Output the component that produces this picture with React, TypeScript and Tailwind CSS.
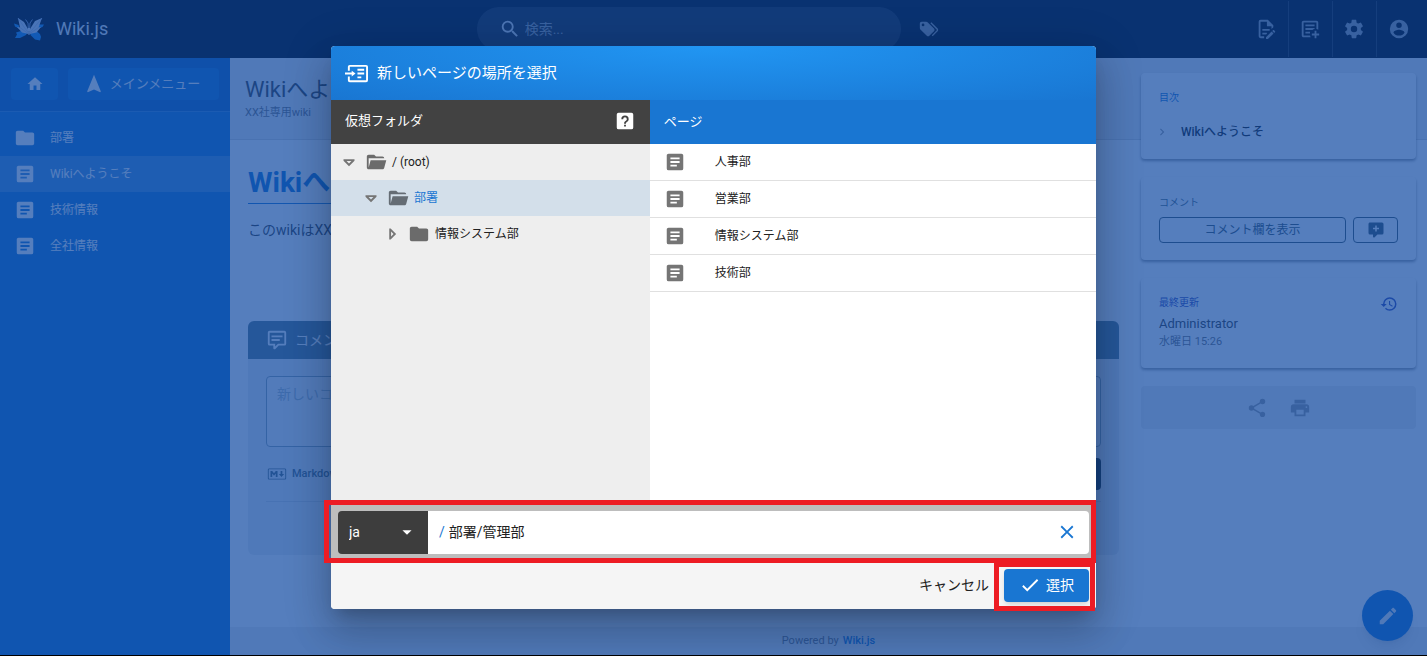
import { useState } from "react";
import clsx from "clsx";

const icons = {
  home: "M10,20V14H14V20H19V12H22L12,3L2,12H5V20H10Z",
  navigation: "M12,2L4.5,20.29L5.21,21L12,18L18.79,21L19.5,20.29L12,2Z",
  folder: "M10,4H4C2.89,4 2,4.89 2,6V18A2,2 0 0,0 4,20H20A2,2 0 0,0 22,18V8C22,6.89 21.1,6 20,6H12L10,4Z",
  folderOpen:
    "M19,20H4C2.89,20 2,19.1 2,18V6C2,4.89 2.89,4 4,4H10L12,6H19A2,2 0 0,1 21,8H21L4,8V18L6.14,10H23.21L20.93,18.5C20.7,19.37 19.92,20 19,20Z",
  page: "M14,17H7V15H14M17,13H7V11H17M17,9H7V7H17M19,3H5C3.89,3 3,3.89 3,5V19A2,2 0 0,0 5,21H19A2,2 0 0,0 21,19V5C21,3.89 20.1,3 19,3Z",
  magnify:
    "M9.5,3A6.5,6.5 0 0,1 16,9.5C16,11.11 15.41,12.59 14.44,13.73L14.71,14H15.5L20.5,19L19,20.5L14,15.5V14.71L13.73,14.44C12.59,15.41 11.11,16 9.5,16A6.5,6.5 0 0,1 3,9.5A6.5,6.5 0 0,1 9.5,3M9.5,5C7,5 5,7 5,9.5C5,12 7,14 9.5,14C12,14 14,12 14,9.5C14,7 12,5 9.5,5Z",
  tags: "M5.5,9A1.5,1.5 0 0,0 7,7.5A1.5,1.5 0 0,0 5.5,6A1.5,1.5 0 0,0 4,7.5A1.5,1.5 0 0,0 5.5,9M17.41,11.58C17.77,11.94 18,12.44 18,13C18,13.55 17.78,14.05 17.41,14.41L12.41,19.41C12.05,19.77 11.55,20 11,20C10.45,20 9.95,19.78 9.58,19.41L2.59,12.42C2.22,12.05 2,11.55 2,11V6C2,4.89 2.89,4 4,4H9C9.55,4 10.05,4.22 10.41,4.58L17.41,11.58M13.54,5.71L14.54,4.71L21.41,11.58C21.78,11.94 22,12.45 22,13C22,13.55 21.78,14.05 21.42,14.41L16.04,19.79L15.04,18.79L20.75,13L13.54,5.71Z",
  pageEdit:
    "M8,12H16V14H8V12M10,20H6V4H13V9H18V12.1L20,10.1V8L14,2H6A2,2 0 0,0 4,4V20A2,2 0 0,0 6,22H10V20M8,18H12.1L13,17.1V16H8V18M20.2,13C20.3,13 20.5,13.1 20.6,13.2L21.9,14.5C22.1,14.7 22.1,15.1 21.9,15.3L20.9,16.3L18.8,14.2L19.8,13.2C19.9,13.1 20,13 20.2,13M20.2,16.9L14.1,23H12V20.9L18.1,14.8L20.2,16.9Z",
  pagePlus:
    "M17 14H19V17H22V19H19V22H17V19H14V17H17V14M5 3H19C20.11 3 21 3.89 21 5V12.8C20.39 12.45 19.72 12.2 19 12.08V5H5V19H12.08C12.2 19.72 12.45 20.39 12.8 21H5C3.89 21 3 20.11 3 19V5C3 3.89 3.89 3 5 3M7 7H17V9H7V7M7 11H17V12.08C16.15 12.22 15.37 12.54 14.68 13H7V11M7 15H12V17H7V15Z",
  cog: "M12,15.5A3.5,3.5 0 0,1 8.5,12A3.5,3.5 0 0,1 12,8.5A3.5,3.5 0 0,1 15.5,12A3.5,3.5 0 0,1 12,15.5M19.43,12.97C19.47,12.65 19.5,12.33 19.5,12C19.5,11.67 19.47,11.34 19.43,11L21.54,9.37C21.73,9.22 21.78,8.95 21.66,8.73L19.66,5.27C19.54,5.05 19.27,4.96 19.05,5.05L16.56,6.05C16.04,5.66 15.5,5.32 14.87,5.07L14.5,2.42C14.46,2.18 14.25,2 14,2H10C9.75,2 9.54,2.18 9.5,2.42L9.13,5.07C8.5,5.32 7.96,5.66 7.44,6.05L4.95,5.05C4.73,4.96 4.46,5.05 4.34,5.27L2.34,8.73C2.21,8.95 2.27,9.22 2.46,9.37L4.57,11C4.53,11.34 4.5,11.67 4.5,12C4.5,12.33 4.53,12.65 4.57,12.97L2.46,14.63C2.27,14.78 2.21,15.05 2.34,15.27L4.34,18.73C4.46,18.95 4.73,19.03 4.95,18.95L7.44,17.94C7.96,18.34 8.5,18.68 9.13,18.93L9.5,21.58C9.54,21.82 9.75,22 10,22H14C14.25,22 14.46,21.82 14.5,21.58L14.87,18.93C15.5,18.67 16.04,18.34 16.56,17.94L19.05,18.95C19.27,19.03 19.54,18.95 19.66,18.73L21.66,15.27C21.78,15.05 21.73,14.78 21.54,14.63L19.43,12.97Z",
  account:
    "M12,19.2C9.5,19.2 7.29,17.92 6,16C6.03,14 10,12.9 12,12.9C14,12.9 17.97,14 18,16C16.71,17.92 14.5,19.2 12,19.2M12,5A3,3 0 0,1 15,8A3,3 0 0,1 12,11A3,3 0 0,1 9,8A3,3 0 0,1 12,5M12,2A10,10 0 0,0 2,12A10,10 0 0,0 12,22A10,10 0 0,0 22,12C22,6.47 17.5,2 12,2Z",
  commentPlus:
    "M9,22A1,1 0 0,1 8,21V18H4A2,2 0 0,1 2,16V4C2,2.89 2.9,2 4,2H20A2,2 0 0,1 22,4V16A2,2 0 0,1 20,18H13.9L10.2,21.71C10,21.9 9.75,22 9.5,22V22H9M11,6V9H8V11H11V14H13V11H16V9H13V6H11Z",
  commentText:
    "M9,22A1,1 0 0,1 8,21V18H4A2,2 0 0,1 2,16V4C2,2.89 2.9,2 4,2H20A2,2 0 0,1 22,4V16A2,2 0 0,1 20,18H13.9L10.2,21.71C10,21.9 9.75,22 9.5,22V22H9M10,16V19.08L13.08,16H20V4H4V16H10M6,7H18V9H6V7M6,11H15V13H6V11Z",
  history:
    "M13.5,8H12V13L16.28,15.54L17,14.33L13.5,12.25V8M13,3A9,9 0 0,0 4,12H1L4.96,16.03L9,12H6A7,7 0 0,1 13,5A7,7 0 0,1 20,12A7,7 0 0,1 13,19C11.07,19 9.32,18.21 8.06,16.94L6.64,18.36C8.27,20 10.5,21 13,21A9,9 0 0,0 22,12A9,9 0 0,0 13,3",
  share:
    "M18,16.08C17.24,16.08 16.56,16.38 16.04,16.85L8.91,12.7C8.96,12.47 9,12.24 9,12C9,11.76 8.96,11.53 8.91,11.3L15.96,7.19C16.5,7.69 17.21,8 18,8A3,3 0 0,0 21,5A3,3 0 0,0 18,2A3,3 0 0,0 15,5C15,5.24 15.04,5.47 15.09,5.7L8.04,9.81C7.5,9.31 6.79,9 6,9A3,3 0 0,0 3,12A3,3 0 0,0 6,15C6.79,15 7.5,14.69 8.04,14.19L15.16,18.34C15.11,18.55 15.08,18.77 15.08,19C15.08,20.61 16.39,21.91 18,21.91C19.61,21.91 20.92,20.61 20.92,19A2.92,2.92 0 0,0 18,16.08Z",
  printer:
    "M18,3H6V7H18M19,12A1,1 0 0,1 18,11A1,1 0 0,1 19,10A1,1 0 0,1 20,11A1,1 0 0,1 19,12M16,19H8V14H16M19,8H5A3,3 0 0,0 2,11V17H6V21H18V17H22V11A3,3 0 0,0 19,8Z",
  markdown:
    "M20.56 18H3.44C2.65 18 2 17.37 2 16.59V7.41C2 6.63 2.65 6 3.44 6H20.56C21.35 6 22 6.63 22 7.41V16.59C22 17.37 21.35 18 20.56 18M3.44 6.94C3.18 6.94 2.96 7.15 2.96 7.41V16.6C2.96 16.85 3.18 17.06 3.44 17.06H20.56C20.82 17.06 21.04 16.85 21.04 16.6V7.41C21.04 7.15 20.82 6.94 20.56 6.94H3.44M4.89 15.19V8.81H6.81L8.73 11.16L10.65 8.81H12.58V15.19H10.65V11.53L8.73 13.88L6.81 11.53V15.19H4.89M16.9 15.19L14 12.09H15.94V8.81H17.86V12.09H19.79L16.9 15.19",
  pencil:
    "M20.71,7.04C21.1,6.65 21.1,6 20.71,5.63L18.37,3.29C18,2.9 17.35,2.9 16.96,3.29L15.12,5.12L18.87,8.87M3,17.25V21H6.75L17.81,9.93L14.06,6.18L3,17.25Z",
  chevronRight: "M8.59,16.58L13.17,12L8.59,7.41L10,6L16,12L10,18L8.59,16.58Z",
  menuDown: "M7,10L12,15L17,10H7Z",
  expanded: "M18,9V10.5L12,16.5L6,10.5V9H18M12,13.67L14.67,11H9.33L12,13.67Z",
  collapsed: "M9,6H10.5L16.5,12L10.5,18H9V6M13.67,12L11,9.33V14.67L13.67,12Z",
  close: "M19,6.41L17.59,5L12,10.59L6.41,5L5,6.41L10.59,12L5,17.59L6.41,19L12,13.41L17.59,19L19,17.59L13.41,12L19,6.41Z",
  check: "M21,7L9,19L3.5,13.5L4.91,12.09L9,16.17L19.59,5.59L21,7Z",
  helpBox:
    "M11,18H13V16H11V18M12,6A4,4 0 0,0 8,10H10A2,2 0 0,1 12,8A2,2 0 0,1 14,10C14,12 11,11.75 11,15H13C13,12.75 16,12.5 16,10A4,4 0 0,0 12,6M5,3H19A2,2 0 0,1 21,5V19A2,2 0 0,1 19,21H5A2,2 0 0,1 3,19V5A2,2 0 0,1 5,3Z",
  pageNext:
    "M22,3H5A2,2 0 0,0 3,5V9H5V5H22V19H5V15H3V19A2,2 0 0,0 5,21H22A2,2 0 0,0 24,19V5A2,2 0 0,0 22,3M7,15V13H0V11H7V9L11,12L7,15M20,13H13V11H20V13M20,9H13V7H20V9M17,17H13V15H17V17Z",
};

type IconName = keyof typeof icons;

function Icon({ name, size = 22, className }: { name: IconName; size?: number; className?: string }) {
  return (
    <svg
      width={size}
      height={size}
      viewBox="0 0 24 24"
      fill="currentColor"
      fillRule="evenodd"
      aria-hidden="true"
      className={clsx("shrink-0", className)}
    >
      <path d={icons[name]} />
    </svg>
  );
}

function Logo() {
  return (
    <svg width="30" height="23" viewBox="0 0 60 46" aria-hidden="true" className="shrink-0">
      <path d="M28 27L14 26L4 29L6 33L2 40L12 40L24 34Z" fill="#1e88e5" />
      <path d="M0 11L9 14L12 22L2 17Z" fill="#1e88e5" />
      <path d="M32 27L46 27L52 32L54 38L52 45L42 43L33 34Z" fill="#1e88e5" />
      <path d="M60 13L50 13L46 22L57 18Z" fill="#1e88e5" />
      <path d="M29 32L16 29L6 18L12 19L8 0L20 8L28 22Z" fill="#d5dcec" />
      <path d="M31 32L45 29L54 18L49 19L56 0L42 6L32 22Z" fill="#d5dcec" />
      <path d="M29 30L20 18L8 0M31 30L42 17L56 0M28 31L12 19M32 31L49 19" fill="none" stroke="#a9b9da" strokeWidth="1.5" />
      <path d="M29 26L28 10L23 3M31 26L32 10L37 3" fill="none" stroke="#8fa0c4" strokeWidth="2" />
      <path d="M28 20H32L31 34H29Z" fill="#e9edf6" />
    </svg>
  );
}

const navItems: { label: string; icon: IconName; active?: boolean }[] = [
  { label: "部署", icon: "folder" },
  { label: "Wikiへようこそ", icon: "page", active: true },
  { label: "技術情報", icon: "page" },
  { label: "全社情報", icon: "page" },
];

const headerActions: { label: string; icon: IconName }[] = [
  { label: "ページ操作", icon: "pageEdit" },
  { label: "新規ページ", icon: "pagePlus" },
  { label: "管理", icon: "cog" },
  { label: "アカウント", icon: "account" },
];

const pages = ["人事部", "営業部", "情報システム部", "技術部"];

function Header() {
  return (
    <header className="grid h-[58px] shrink-0 grid-cols-3 items-center bg-black text-[#9e9e9e]">
      <a href="#" className="flex items-center gap-3 pl-[14px] text-[#eeeeee]">
        <Logo />
        <span className="text-lg">Wiki.js</span>
      </a>
      <div className="flex items-center">
        <label className="ml-px flex h-[44px] flex-1 items-center gap-1 rounded-full bg-[#212121] pl-[22px] text-[#e0e0e0]">
          <Icon name="magnify" />
          <input
            type="text"
            aria-label="検索"
            placeholder="検索..."
            className="min-w-0 flex-1 bg-transparent text-sm outline-none placeholder:text-[#9e9e9e]"
          />
        </label>
        <button aria-label="タグ" className="ml-[6px] flex w-[44px] justify-center">
          <Icon name="tags" />
        </button>
      </div>
      <div className="flex justify-end divide-x divide-[#2b2b2b] pr-[6px]">
        {headerActions.map((action) => (
          <button key={action.label} aria-label={action.label} className="flex h-[56px] w-[44px] items-center justify-center">
            <Icon name={action.icon} />
          </button>
        ))}
      </div>
    </header>
  );
}

function Sidebar() {
  return (
    <aside className="w-[230px] shrink-0 bg-[#1976d2] text-[13px] text-white">
      <div className="flex h-[54px] gap-[10px] border-b border-[#3f8bd9] bg-[#1565c0] px-[11px] py-[10px]">
        <button aria-label="ホーム" className="flex h-8 w-[47px] items-center justify-center rounded bg-[#1976d2]">
          <Icon name="home" size={18} />
        </button>
        <button className="flex h-8 flex-1 items-center justify-center gap-[5px] rounded bg-[#1976d2] pr-1">
          <Icon name="navigation" />
          メインメニュー
        </button>
      </div>
      <nav className="pt-2">
        {navItems.map((item) => (
          <a
            key={item.label}
            href="#"
            className={clsx("flex h-9 items-center gap-[14px] pl-[14px] text-xs", item.active && "bg-[#4791db]")}
          >
            <Icon name={item.icon} />
            {item.label}
          </a>
        ))}
      </nav>
    </aside>
  );
}

function Comments() {
  return (
    <section className="mt-[80px] overflow-hidden rounded-md bg-[#eceff1]">
      <h2 className="flex h-[38px] items-center gap-[7px] bg-[#607d8b] pl-[18px] text-sm text-white">
        <Icon name="commentText" />
        コメント
      </h2>
      <div className="px-[18px] pt-[17px] pb-[53px]">
        <textarea
          aria-label="新しいコメント"
          placeholder="新しいコメントを書く..."
          className="block h-[71px] w-full resize-none rounded border border-[#90a4ae] bg-[#f5f5f5] px-[10px] py-[7px] text-sm outline-none placeholder:text-[#b0bec5]"
        />
        <div className="mt-[11px] flex items-center gap-1 border-b border-[#cfd8dc] pb-[11px] text-[11px] font-medium text-[#546e7a]">
          <Icon name="markdown" />
          <span>Markdown Format</span>
          <button className="ml-auto h-8 rounded bg-[#263238] px-4 text-white">コメントを投稿</button>
        </div>
      </div>
    </section>
  );
}

function PageInfo() {
  return (
    <aside className="relative -mt-[67px] mr-[11px] ml-[22px] w-[275px] shrink-0">
      <section className="h-[86px] rounded bg-white px-[18px] pt-[17px] shadow-[0_2px_3px_rgba(0,0,0,0.4)]">
        <h2 className="text-[10px] leading-4 text-[#1976d2]">目次</h2>
        <a href="#" className="mt-4 flex items-center text-xs leading-5 text-[#212121]">
          <Icon name="chevronRight" size={14} className="-ml-1 text-[#9e9e9e]" />
          <span className="ml-3 font-medium">Wikiへようこそ</span>
        </a>
      </section>
      <section className="mt-[18px] h-[83px] rounded bg-white px-[18px] pt-[18px] shadow-[0_2px_3px_rgba(0,0,0,0.4)]">
        <h2 className="text-[10px] leading-4 text-[#546e7a]">コメント</h2>
        <div className="mt-[6px] flex gap-[7px] text-[#455a64]">
          <button className="h-[26px] flex-1 rounded border border-current text-xs">コメント欄を表示</button>
          <button aria-label="コメントを追加" className="flex h-[26px] w-[45px] items-center justify-center rounded border border-current">
            <Icon name="commentPlus" size={18} />
          </button>
        </div>
      </section>
      <section className="mt-[18px] flex h-[90px] rounded bg-white px-[18px] pt-[17px] shadow-[0_2px_3px_rgba(0,0,0,0.4)]">
        <div className="flex-1">
          <h2 className="text-[10px] leading-4 text-[#3f51b5]">最終更新</h2>
          <p className="mt-[3px] text-[13px] leading-5 text-[#424242]">Administrator</p>
          <p className="text-[11px] leading-4 text-[#757575]">水曜日 15:26</p>
        </div>
        <a href="#" aria-label="履歴" className="text-[#3f51b5]">
          <Icon name="history" size={18} />
        </a>
      </section>
      <div className="mt-[18px] flex h-[43px] items-center justify-center gap-[21px] rounded bg-[#eeeeee] text-[#9e9e9e]">
        <button aria-label="共有">
          <Icon name="share" />
        </button>
        <button aria-label="印刷">
          <Icon name="printer" />
        </button>
      </div>
    </aside>
  );
}

function TreeRow({
  label,
  level,
  open = false,
  selected = false,
}: {
  label: string;
  level: "root" | "child" | "grandchild";
  open?: boolean;
  selected?: boolean;
}) {
  return (
    <li
      className={clsx(
        "flex h-9 items-center gap-[5px] text-xs text-[#212121]",
        level === "root" && "pl-[7px]",
        level === "child" && "pl-[29px]",
        level === "grandchild" && "pl-[50px]",
        selected && "bg-[#d3dfea]"
      )}
    >
      <button aria-label={open ? "閉じる" : "開く"} className="text-[#757575]">
        <Icon name={open ? "expanded" : "collapsed"} />
      </button>
      <button className={clsx("flex items-center gap-[5px]", selected && "text-[#1976d2]")}>
        <Icon name={open ? "folderOpen" : "folder"} className={selected ? "text-[#646c74]" : "text-[#6b6b6b]"} />
        {label}
      </button>
    </li>
  );
}

function PageSelector() {
  const [locale, setLocale] = useState("ja");
  const [path, setPath] = useState("部署/管理部");

  return (
    <div
      role="dialog"
      aria-labelledby="selector-title"
      className="relative w-full max-w-[765px] rounded bg-white shadow-[0_11px_15px_-7px_rgba(0,0,0,0.2),0_24px_38px_3px_rgba(0,0,0,0.14),0_9px_46px_8px_rgba(0,0,0,0.12)]"
    >
      <h1
        id="selector-title"
        className="flex h-[54px] items-center gap-[9px] rounded-t bg-[radial-gradient(ellipse_at_top,#2196f3,#1976d2)] pl-[14px] text-[15px] text-white"
      >
        <Icon name="pageNext" size={23} />
        新しいページの場所を選択
      </h1>

      <div className="flex h-[404px]">
        <section className="w-5/12 bg-[#eeeeee]">
          <div className="flex h-11 items-center justify-between bg-[#424242] px-[14px] pb-[2px] text-[13px] text-white">
            仮想フォルダ
            <button aria-label="ヘルプ">
              <Icon name="helpBox" />
            </button>
          </div>
          <ul>
            <TreeRow label="/ (root)" level="root" open />
            <TreeRow label="部署" level="child" open selected />
            <TreeRow label="情報システム部" level="grandchild" />
          </ul>
        </section>
        <section className="w-7/12">
          <div className="flex h-11 items-center bg-[#1976d2] px-[14px] text-[13px] text-white">ページ</div>
          <ul>
            {pages.map((page) => (
              <li key={page} className="border-b border-[#e0e0e0]">
                <button className="flex h-9 w-full items-center gap-[29px] pl-[14px] text-xs text-[#212121]">
                  <Icon name="page" className="text-[#757575]" />
                  {page}
                </button>
              </li>
            ))}
          </ul>
        </section>
      </div>

      {/* Path bar */}
      <div className="relative bg-[#bdbdbd] p-[7px]">
        <div className="flex h-[43px] overflow-hidden rounded">
          <div className="relative w-[90px] shrink-0 bg-[#3d3d3d] text-white">
            <select
              aria-label="ロケール"
              value={locale}
              onChange={(e) => setLocale(e.target.value)}
              className="h-full w-full appearance-none bg-transparent pb-[2px] pl-[11px] text-sm outline-none"
            >
              <option value="ja">ja</option>
              <option value="en">en</option>
            </select>
            <Icon name="menuDown" className="pointer-events-none absolute top-[10px] right-[10px]" />
          </div>
          <label className="flex flex-1 items-center gap-1 bg-white px-[11px] pb-[2px] text-sm">
            <span className="text-[#1976d2]">/</span>
            <input
              type="text"
              aria-label="パス"
              value={path}
              onChange={(e) => setPath(e.target.value)}
              className="min-w-0 flex-1 bg-transparent text-[#212121] outline-none"
            />
            <button aria-label="クリア" onClick={() => setPath("")} className="text-[#1976d2]">
              <Icon name="close" />
            </button>
          </label>
        </div>
        <div className="pointer-events-none absolute -top-1 right-0 -bottom-[2px] -left-[7px] border-5 border-[#ed1c24]" />
      </div>

      {/* Actions */}
      <div className="flex h-12 items-center justify-end gap-[15px] rounded-b bg-[#f5f5f5] pr-[7px] text-sm">
        <button className="text-[#212121]">キャンセル</button>
        <div className="relative">
          <button className="flex h-[33px] w-[85px] items-center justify-center gap-[5px] rounded bg-[#1976d2] pb-px text-white shadow-md">
            <Icon name="check" />
            選択
          </button>
          <div className="pointer-events-none absolute -top-[7px] -right-[6px] -bottom-[9px] -left-[10px] border-5 border-[#ed1c24]" />
        </div>
      </div>
    </div>
  );
}

export default function App() {
  return (
    <div className="relative flex h-screen flex-col overflow-hidden border-b border-black bg-white font-['Roboto','Noto_Sans_CJK_JP',sans-serif]">
      <Header />

      <div className="flex min-h-0 flex-1">
        <Sidebar />
        <main className="flex min-w-0 flex-1 flex-col">
          <div className="h-[82px] shrink-0 border-b border-[#d5d5d5] bg-[#eeeeee] pt-[17px] pl-[15px]">
            <div className="text-[22px] leading-[30px] text-[#424242]">Wikiへようこそ</div>
            <div className="text-[11px] leading-4 text-[#757575]">XX社専用wiki</div>
          </div>
          <div className="flex min-h-0 flex-1">
            <article className="min-w-0 flex-1 pt-[25px] pl-[18px]">
              <h1 className="pb-[2px] text-[28px] leading-9 font-bold text-[#1976d2]">Wikiへようこそ</h1>
              <div className="h-px bg-linear-to-r from-[#1976d2] to-transparent" />
              <p className="mt-[15px] text-sm leading-[22px] text-[#424242]">このwikiはXX社専用です</p>
              <Comments />
            </article>
            <PageInfo />
          </div>
          <footer className="flex h-7 shrink-0 items-center justify-center gap-1 bg-[#eeeeee] text-[11px] text-[#757575]">
            Powered by
            <a href="#" className="font-medium text-[#1976d2]">
              Wiki.js
            </a>
          </footer>
        </main>
      </div>

      <button
        aria-label="編集"
        className="absolute right-[14px] bottom-[14px] flex h-[51px] w-[51px] items-center justify-center rounded-full bg-[#1976d2] text-[#eeeeee] shadow-lg"
      >
        <Icon name="pencil" />
      </button>

      {/* Dialog overlay */}
      <div className="absolute inset-0 flex items-center justify-center bg-[#0d47a1]/70">
        <PageSelector />
      </div>
    </div>
  );
}
